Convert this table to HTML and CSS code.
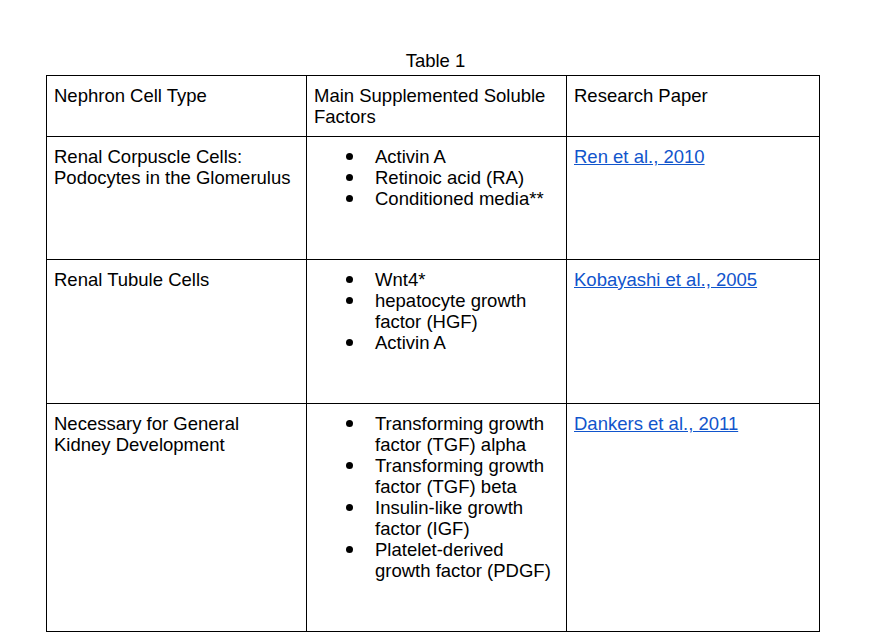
FILE: index.html
```html
<!DOCTYPE html>
<html>
<head>
<meta charset="utf-8">
<link rel="stylesheet" href="styles.css">
</head>
<body>
<div class="doc">
  <div class="caption">Table 1</div>
  <table class="tbl">
    <colgroup>
      <col class="c1"><col class="c2"><col class="c3">
    </colgroup>
    <tr class="r0">
      <td>Nephron Cell Type</td>
      <td>Main Supplemented Soluble Factors</td>
      <td>Research Paper</td>
    </tr>
    <tr class="r1">
      <td>Renal Corpuscle Cells: Podocytes in the Glomerulus</td>
      <td>
        <ul class="bl">
          <li>Activin A</li>
          <li>Retinoic acid (RA)</li>
          <li>Conditioned media**</li>
        </ul>
      </td>
      <td><a href="#" class="ref">Ren et al., 2010</a></td>
    </tr>
    <tr class="r2">
      <td>Renal Tubule Cells</td>
      <td>
        <ul class="bl">
          <li>Wnt4*</li>
          <li>hepatocyte growth factor (HGF)</li>
          <li>Activin A</li>
        </ul>
      </td>
      <td><a href="#" class="ref">Kobayashi et al., 2005</a></td>
    </tr>
    <tr class="r3">
      <td>Necessary for General<br>Kidney Development</td>
      <td>
        <ul class="bl">
          <li>Transforming growth factor (TGF) alpha</li>
          <li>Transforming growth factor (TGF) beta</li>
          <li>Insulin-like growth factor (IGF)</li>
          <li>Platelet-derived growth factor (PDGF)</li>
        </ul>
      </td>
      <td><a href="#" class="ref">Dankers et al., 2011</a></td>
    </tr>
  </table>
</div>
</body>
</html>
```
FILE: styles.css
```css
html, body {
  margin: 0;
  padding: 0;
  background: #fff;
}
body {
  font-family: "Liberation Sans", Arial, sans-serif;
  font-size: 18.5px;
  line-height: 21px;
  color: #000;
}
.doc {
  padding: 50px 0 0 46px;
  width: 773px;
}
.caption {
  text-align: center;
  height: 25px;
  padding-left: 6px;
}
.tbl {
  border-collapse: collapse;
  table-layout: fixed;
  width: 773px;
}
.c1 { width: 260px; }
.c2 { width: 260px; }
.c3 { width: 253px; }
.tbl td {
  border: 1px solid #000;
  vertical-align: top;
  padding: 9px 6px 0 7px;
}
.r0 td { height: 51px; }
.r1 td { height: 113px; }
.r2 td { height: 134px; }
.r3 td { height: 218px; }
.bl {
  list-style: none;
  margin: 0;
  padding: 0 0 0 32px;
}
.bl li {
  position: relative;
  padding-left: 29px;
}
.bl li::before {
  content: "";
  position: absolute;
  left: 0;
  top: 7px;
  width: 7px;
  height: 7px;
  border-radius: 50%;
  background: #000;
}
.ref {
  color: #1155cc;
  text-decoration: underline;
}
```
